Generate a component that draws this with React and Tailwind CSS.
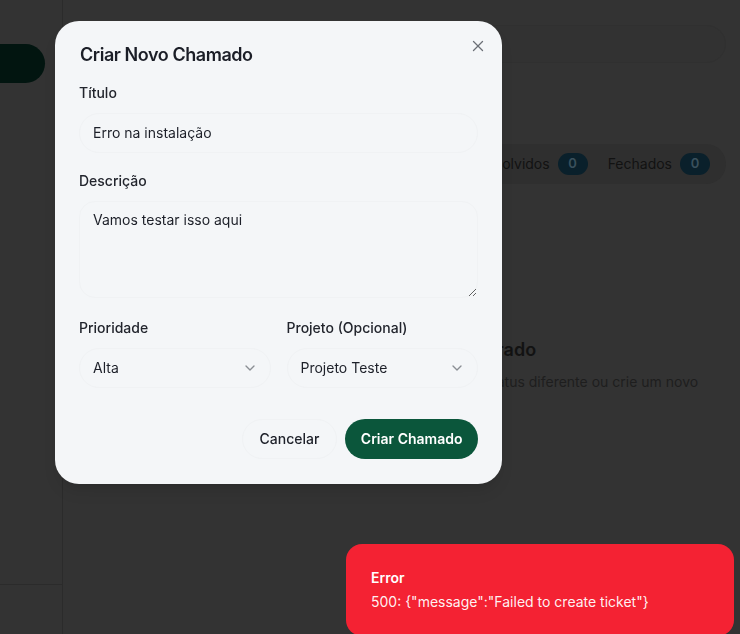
import { X, ChevronDown } from 'lucide-react';

function Sidebar() {
  return (
    <aside className="w-[63px] shrink-0 border-r border-[#2b2b2b] flex flex-col overflow-hidden">
      <div className="pt-[44px]">
        <div className="-ml-[40px] w-[85px] h-[39px] rounded-full bg-[#021510]"></div>
      </div>
      <div className="flex-1"></div>
      <div className="h-[50px] border-t border-[#2b2b2b]"></div>
    </aside>
  );
}

function StatusTab({ label, count }) {
  return (
    <div className="flex items-center gap-2">
      <span className="text-sm text-[#121212]">{label}</span>
      <span className="h-[22px] w-[30px] rounded-full bg-[#0a202b] text-[13px] font-semibold text-[#3a505c] flex items-center justify-center">
        {count}
      </span>
    </div>
  );
}

function Page() {
  return (
    <main className="flex-1 px-[14px] pt-[25px]">
      <div className="h-[38px] rounded-full border border-[#303030] bg-[#323232]"></div>

      <div className="mt-[81px] flex justify-end">
        <div className="h-[40px] rounded-full bg-[#2f2f2f] px-4 flex items-center gap-5">
          <StatusTab label="Todos" count="0" />
          <StatusTab label="Abertos" count="0" />
          <StatusTab label="Resolvidos" count="0" />
          <StatusTab label="Fechados" count="0" />
        </div>
      </div>

      <div className="mt-[152px] flex flex-col items-center text-center pl-[6px]">
        <h3 className="text-lg font-semibold text-[#121212]">Nenhum chamado encontrado</h3>
        <p className="mt-2 max-w-[640px] text-sm text-[#1e1e1e]">
          Não há chamados com este status. Tente selecionar um status diferente ou crie um novo chamado.
        </p>
      </div>
    </main>
  );
}

function Field({ label, children }) {
  return (
    <div>
      <label className="block text-sm font-medium text-[#22252d]">{label}</label>
      <div className="mt-2.5">{children}</div>
    </div>
  );
}

function Select({ value }) {
  return (
    <div className="h-[40px] rounded-full border border-[#f0f2f4] px-3 flex items-center justify-between text-sm text-[#1d2029]">
      <span className="pl-px">{value}</span>
      <ChevronDown size={16} className="text-[#8a8e94]" />
    </div>
  );
}

function NewTicketModal() {
  return (
    <div className="fixed left-[55px] top-[21px] w-[447px] rounded-3xl bg-[#f4f6f8] shadow-lg px-6 pt-5 pb-[25px]">
      <button className="absolute right-[15px] top-[16px] text-[#6b6f76]">
        <X size={18} strokeWidth={1.75} />
      </button>

      <h2 className="pl-px text-lg leading-7 font-semibold tracking-tight text-[#1b1e27]">Criar Novo Chamado</h2>

      <div className="mt-3.5 flex flex-col gap-[18px]">
        <Field label="Título">
          <div className="h-[40px] rounded-full border border-[#f0f2f4] px-3 pl-[13px] flex items-center text-sm text-[#1d2029]">
            Erro na instalação
          </div>
        </Field>

        <Field label="Descrição">
          <textarea
            rows={4}
            defaultValue="Vamos testar isso aqui"
            className="block w-full h-[97px] rounded-2xl border border-[#f0f2f4] bg-transparent pl-[13px] pr-3 py-2 text-sm leading-5 text-[#1d2029] outline-none"
          />
        </Field>

        <div className="grid grid-cols-2 gap-4 pt-[2px]">
          <Field label="Prioridade">
            <Select value="Alta" />
          </Field>
          <Field label="Projeto (Opcional)">
            <Select value="Projeto Teste" />
          </Field>
        </div>
      </div>

      <div className="mt-[31px] flex justify-end gap-2">
        <button className="h-[40px] px-[17px] rounded-full border border-[#f0f2f4] text-sm font-medium text-[#1d2029]">
          Cancelar
        </button>
        <button className="h-[40px] px-[15.5px] rounded-full bg-[#0b563b] text-sm font-semibold text-white">
          Criar Chamado
        </button>
      </div>
    </div>
  );
}

function Toast() {
  return (
    <div className="fixed right-[6px] bottom-[-2px] w-[388px] rounded-2xl bg-[#f42233] p-6 pl-[25px] flex flex-col gap-1">
      <div className="text-sm font-semibold text-white">Error</div>
      <div className="text-sm text-white/95">500: {'{"message":"Failed to create ticket"}'}</div>
    </div>
  );
}

export default function App() {
  return (
    <div className="h-[634px] w-full overflow-hidden bg-[#333333] font-['Inter',sans-serif] flex">
      <Sidebar />
      <Page />
      <NewTicketModal />
      <Toast />
    </div>
  );
}
